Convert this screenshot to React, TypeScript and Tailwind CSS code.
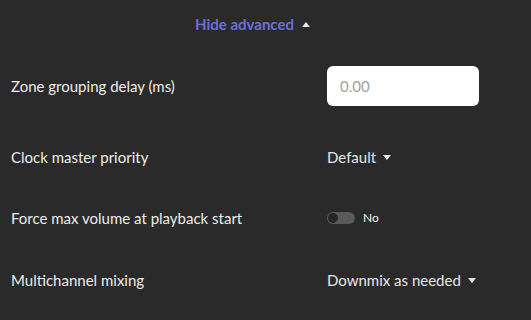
import React from 'react';

const Caret = ({ up = false }: { up?: boolean }) => (
  <svg width="8" height="5" viewBox="0 0 8 5" className="ml-[7px] shrink-0">
    {up ? <path d="M0 5 L4 0 L8 5 Z" fill="#e6e6e6" /> : <path d="M0 0 L8 0 L4 5 Z" fill="#e6e6e6" />}
  </svg>
);

const Row: React.FC<{ label: string; className: string; children: React.ReactNode }> = ({ label, className, children }) => (
  <div className={`grid grid-cols-[316px_1fr] items-center pl-[11px] ${className}`}>
    <span className="text-[15px] text-[#ececec]">{label}</span>
    <div className="flex items-center">{children}</div>
  </div>
);

export default function App() {
  return (
    <div className="w-[531px] h-[320px] bg-[#2a2a2a] overflow-hidden font-['Lato',sans-serif]">
      <div className="h-[48px] flex items-center justify-center pr-[26px]">
        <span className="text-[15px] font-bold text-[#6a6fd8]">Hide advanced</span>
        <svg width="8" height="5" viewBox="0 0 8 5" className="ml-[8px] shrink-0">
          <path d="M0 5 L4 0 L8 5 Z" fill="#e6e6e6" />
        </svg>
      </div>

      <Row label="Zone grouping delay (ms)" className="h-[76px]">
        <div className="w-[152px] h-[40px] bg-white rounded-[6px] flex items-center pl-[13px] text-[15px] text-[#a0a0a0]">
          0.00
        </div>
      </Row>

      <Row label="Clock master priority" className="h-[66px]">
        <span className="text-[15px] text-[#e6e6e6]">Default</span>
        <Caret />
      </Row>

      <Row label="Force max volume at playback start" className="h-[56px]">
        <div className="w-[28px] h-[12px] rounded-full bg-[#5a5a5a] relative">
          <div className="absolute left-[1px] top-[1px] w-[10px] h-[10px] rounded-full bg-[#262626]" />
        </div>
        <span className="ml-[8px] text-[12px] text-[#f0f0f0]">No</span>
      </Row>

      <Row label="Multichannel mixing" className="h-[68px]">
        <span className="text-[15px] text-[#e6e6e6]">Downmix as needed</span>
        <Caret />
      </Row>
    </div>
  );
}
